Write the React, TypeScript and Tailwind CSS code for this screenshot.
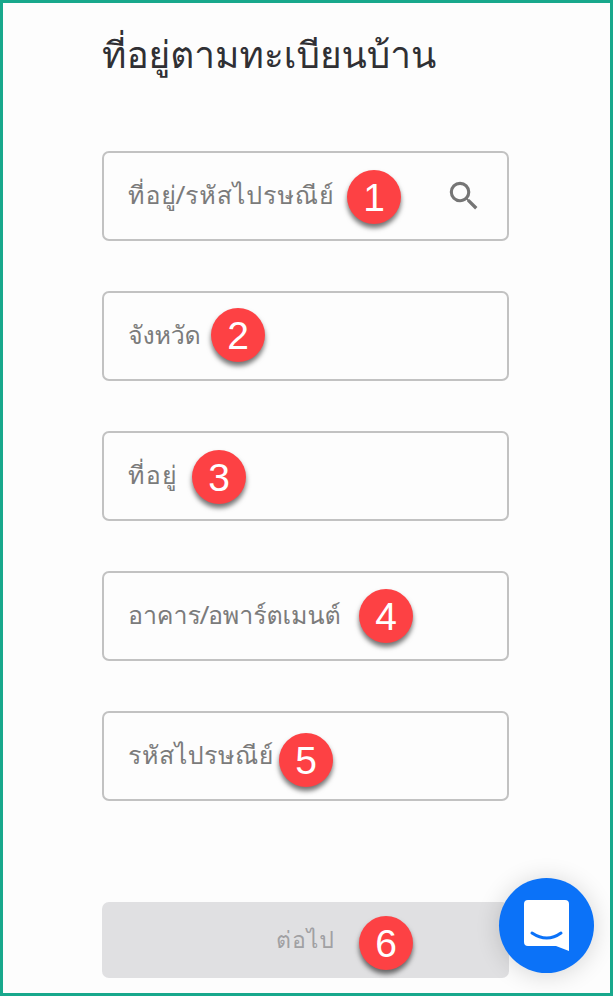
interface BadgeProps {
  value: number;
  className: string;
}

interface Field {
  label: string;
  labelClass: string;
  badgeClass: string;
  search?: boolean;
}

const fields: Field[] = [
  { label: "ที่อยู่/รหัสไปรษณีย์", labelClass: "tracking-[0.9px]", badgeClass: "left-[243px] top-[17px]", search: true },
  { label: "จังหวัด", labelClass: "tracking-[-0.2px]", badgeClass: "left-[107px] top-[15px]" },
  { label: "ที่อยู่", labelClass: "tracking-[1.2px]", badgeClass: "left-[88px] top-[17px]" },
  { label: "อาคาร/อพาร์ตเมนต์", labelClass: "tracking-[-0.1px]", badgeClass: "left-[255px] top-[16px]" },
  { label: "รหัสไปรษณีย์", labelClass: "tracking-[0.5px]", badgeClass: "left-[175px] top-[20px]" },
];

function StepBadge({ value, className }: BadgeProps) {
  return (
    <span
      className={`absolute flex size-[54px] items-center justify-center rounded-full bg-[#fd4144] font-['Liberation_Sans',sans-serif] text-[39px] leading-none tracking-normal text-white shadow-[0_4px_5px_rgba(0,0,0,0.55)] ${className}`}
    >
      {value}
    </span>
  );
}

function SearchIcon() {
  return (
    <svg viewBox="0 0 24 24" className="size-[38px]" fill="#757575">
      <path d="M15.5 14h-.79l-.28-.27A6.471 6.471 0 0 0 16 9.5 6.5 6.5 0 1 0 9.5 16c1.61 0 3.09-.59 4.23-1.57l.27.28v.79l5 4.99L20.49 19l-4.99-5zm-6 0C7.01 14 5 11.99 5 9.5S7.01 5 9.5 5 14 7.01 14 9.5 11.99 14 9.5 14z" />
    </svg>
  );
}

function ChatButton() {
  return (
    <button className="absolute top-[875px] left-[496px] size-[95px] rounded-full bg-[#0b72f8] shadow-[0_2px_24px_rgba(0,0,0,0.16)]">
      <svg viewBox="0 0 95 95" className="size-full" fill="none">
        <path d="M29 22H66Q70 22 70 26V73L57 68H29Q25 68 25 64V26Q25 22 29 22Z" fill="white" />
        <path d="M33 55Q48 65 62 55" stroke="#0b72f8" strokeWidth="3" strokeLinecap="round" />
      </svg>
    </button>
  );
}

export default function App() {
  return (
    <main className="relative h-[996px] w-[613px] overflow-hidden border-3 border-[#18a88c] bg-[#fdfdfd] px-[99px] font-['Loma',sans-serif]">
      <h1 className="flex h-[148px] items-start pt-[28px] text-[37px] leading-[48px] whitespace-nowrap text-[#303034]">
        ที่อยู่ตามทะเบียนบ้าน
      </h1>

      <form className="flex w-[407px] flex-col gap-[50px]">
        {fields.map((field, index) => (
          <label
            key={field.label}
            className="relative flex h-[90px] items-center justify-between rounded-[7px] border-2 border-[#c2c2c2] pr-[24px] pl-[24px] text-[25px] text-[#7b7b7b]"
          >
            <span className={`whitespace-nowrap ${field.labelClass}`}>{field.label}</span>
            {field.search && <SearchIcon />}
            <StepBadge value={index + 1} className={field.badgeClass} />
          </label>
        ))}

        <button
          type="button"
          className="relative mt-[51px] flex h-[76px] items-center justify-center rounded-[7px] bg-[#e0e0e2] text-[23px] tracking-[1px] text-[#a0a0a3]"
        >
          <span>ต่อไป</span>
          <StepBadge value={6} className="left-[257px] top-[14px]" />
        </button>
      </form>

      <ChatButton />
    </main>
  );
}
